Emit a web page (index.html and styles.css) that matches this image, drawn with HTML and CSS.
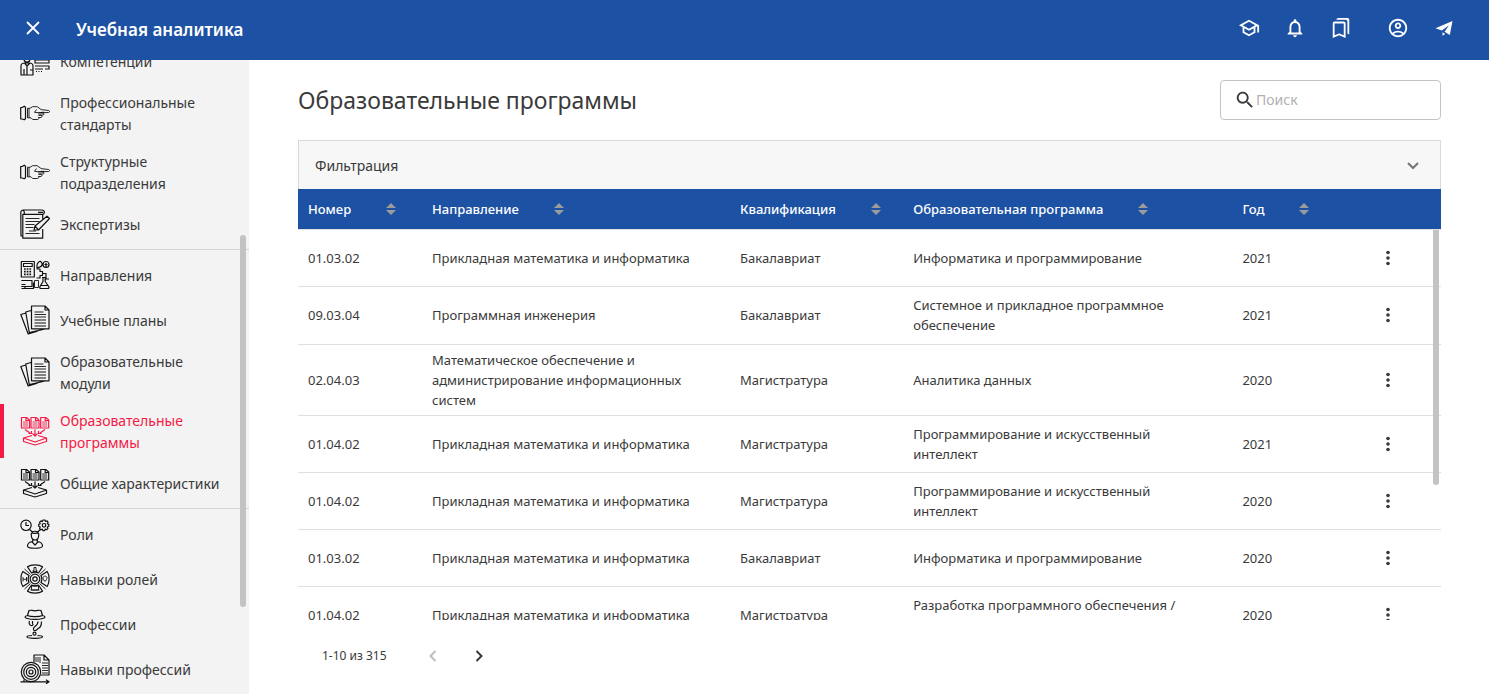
FILE: index.html
```html
<!DOCTYPE html>
<html lang="ru">
<head>
<meta charset="utf-8">
<title>Учебная аналитика</title>
<link rel="stylesheet" href="styles.css">
</head>
<body>
<svg class="sprite" aria-hidden="true">
  <symbol id="hand" viewBox="0 0 30 30">
    <path d="M.7 9.500h1.500l2-1.300 1.300 1v11.600l-1.300 1-2-.8H.7z" />
    <path class="thin" d="M7.500 10.300v9.500M9 10.300v9.500M7.500 10.300l2.500 0 2.600-1.600h4.600l4 2.900 7.400.9c1.200.2 1.200 1.900 0 2l-7.600.2M7.500 19.800l3.500 0 1.700 1.700h4.700c1.500 0 1.700-1.400 1-1.900M16.500 11.500l-2 2.800 4 .4 5.500-.5M18 15h5c1.500.3 1.300 1.900 0 2h-4.500M18.500 17.300h2.600c1.300.3 1.100 2.100-.2 2.200h-2.600" />
  </symbol>
  <symbol id="competence" viewBox="0 0 30 30">
    <path d="M1 29V20c0-2 2-3 4-3h4c2 0 4 1 4 3v9zM4 29v-6M7 20v9M10 24h3M4.500 17L7 20l3-3M4 13a3 3 0 0 0 6 0a3 3 0 0 0-6 0M15 14h14v3H15zM15 20h14v3H25M15 23h8M16 25.500h1M18.500 25.500h1M21 25.500h1" />
  </symbol>
  <symbol id="expert" viewBox="0 0 30 30">
    <path d="M.8 3.500c0-3 3.500-3 3.500 0v1.800H2.800V27H1zM2.800 1H22c3 0 3 4.300.6 4.300H4.300M22.700 5.300V10M22.700 20v9.200H2.800V27M18 3.300h5M14 21l1-4L27 7.200l2.500 2.300-11 11.500zM15 17l3.500 3.800" />
    <path class="thin" d="M5.500 9.500h14M5.500 12.500h14M5.500 15.500h9M5.500 18.500h8M5.500 24.500h14M9 22h7" />
  </symbol>
  <symbol id="direction" viewBox="0 0 30 30">
    <path d="M1.300 1.500h13v15.500h-13zM3.500 3.500h8.700v3H3.500zM17 5.500c0-2 2-4.200 3-4.200s2.500 2 2 3.700-2.500 2.500-5 3zM23 4.500a3 3 0 1 0 6 0a3 3 0 1 0-6 0M24.500 4.500h3M26 3v4.500M16.500 9h3.500v2.500h2.500v4H20V18h-3.500M22.500 13.500h3.500v5.500h3M1.300 20.500H12v6H1.300M5 26.500v2H1.500M5 28.500h8.500v-6M1.500 24.500h4M22 17.500h4M23 17.500v4L20 26.500c-.6 1.500 0 2 1 2h6.500c1.500 0 1.800-1 1.200-2l-3.500-5v-4M20.500 25.500h8" />
    <path class="dots" d="M4 9h8M4 11.700h8M4 14.400h8" />
    <path class="thin" d="M14.500 20.500h4v7h-4z" />
  </symbol>
  <symbol id="papers" viewBox="0 0 30 30">
    <path d="M11.500 1H25l4 4v18.800H11.500zM25 1v4h4M11 5.500L5.700 7l3.600 20.600L25 24M6 8L.8 9.500 8.200 29l10-3" />
    <path d="M14.500 15h11.500M14.500 18h11.500M14.500 21h11.500" /><path class="thin" d="M14.500 7h9M14.500 9.500h11.500M14.500 12h11.500" />
  </symbol>
  <symbol id="program" viewBox="0 0 30 30">
    <path d="M1.500 1.500h5l3 2.500v8h-8zM11 1.500h5l3 2.500v8h-8zM20.700 1.500h5l3 2.500v8h-8zM6 1.500V4.500h3M15.500 1.500V4.500h3M25.200 1.500V4.500h3" />
    <path class="thin" d="M3 6h5M3 8h5M3 10h5M12.500 6h5M12.500 8h5M12.500 10h5M22.200 6h5M22.200 8h5M22.200 10h5" />
    <path d="M5 13.500l5 3.500M8.500 17.500h3v-2.500M25 13.500l-5 3.500M21.500 17.500h-3v-2.500M15 13.500v6M12.500 17.500L15 20l2.500-2.500" />
    <path d="M12 19.500L3.500 22l11.500 4 11.500-4L18 19.500M3.500 22v3.500L15 29l11.500-3.500V22" />
  </symbol>
  <symbol id="role" viewBox="0 0 30 30">
    <circle cx="6" cy="6.300" r="5.200"/><path d="M6 3v3.500h3" />
    <circle cx="24" cy="6.300" r="1.800"/><path d="M23 1h2l.4 1.500 1.700-.6 1 1.400-.8 1.300 1.500.7v2l-1.500.7.7 1.400-1.400 1.300-1.400-.6-.6 1.500h-1.700l-.6-1.500-1.400.7-1.300-1.300.6-1.500-1.500-.7v-2l1.500-.7-.6-1.400 1.300-1.300 1.400.7z" />
    <path d="M9.500 10.500l3 2.500M20.500 10.500l-3 2.500M11.300 16c-1-5 8.400-5 7.400 0 0 3-1.300 5-3.700 5s-3.700-2-3.700-5zM11.500 14c3 1 5 0 7 0M12.700 20.500v2C9 23 7.500 24.500 7.500 27c0 3 15 3 15 0 0-2.500-1.500-4-5.200-4.500v-2M12 22.800l3 3.200 3-3.200" />
  </symbol>
  <symbol id="wheel" viewBox="0 0 30 30">
    <circle cx="15" cy="15" r="4.800"/><circle cx="15" cy="15" r="2.200"/>
    <path d="M7.500 2.800C11 .3 19 .3 22.500 2.800L18.500 9c-2-1-5-1-7 0zM7.500 27.200c3.500 2.500 11.500 2.500 15 0L18.500 21c-2 1-5 1-7 0zM2.800 7.500C.3 11 .3 19 2.800 22.500L9 18.500c-1-2-1-5 0-7zM27.200 7.500c2.500 3.500 2.500 11.500 0 15L21 18.500c1-2 1-5 0-7z" />
    <path class="thin" d="M13 7.500V6.500h1L14 3.500h2l0 3h1v1zM3 13v4.500M6.500 13v4.500M3 15.300h3.500M11.500 22h7v4h-7zM10.500 26h9M23 14c0-2.500 4-2.500 4 0 0 1.500-1.200 1.700-1.200 3h-1.600c0-1.300-1.200-1.500-1.200-3M4.500 5l6 5.500M25.500 5l-6 5.500M4.500 25l6-5.500M25.500 25l-6-5.500" />
  </symbol>
  <symbol id="spy" viewBox="0 0 30 30">
    <path d="M7.500 6.500L9 1.500c2-.8 3 .3 6 .3s4-1.100 6-.3l1.500 5M7.500 6.500c3 1.500 12 1.500 15 0M7.500 6.500c-3 .5-3 2-1 2.700 5 1.500 12 1.500 17 0 2-.7 2-2.200-1-2.700M9.500 12c-.8 2-.3 4 1.500 4.500 1.500.3 2-.5 2-1.500M12.500 12v3M21.500 12.500c0 5-1.500 6-4 7.500-1 1-1 2-3 1.500-2-.5-1-3 .5-4 2-1.300 3-2.500 3-5" />
    <circle cx="14.500" cy="24.700" r="1.500"/><path d="M12 26.500c-2 0-5 .3-5 1.300 0 2 15.500 2 15.500 0 0-1-3-1.300-5-1.300" />
  </symbol>
  <symbol id="target" viewBox="0 0 30 30">
    <circle cx="11" cy="18" r="9.700"/><circle cx="11" cy="18" r="7.300"/><circle cx="11" cy="18" r="4.700"/><circle cx="11" cy="18" r="2"/>
    <path d="M14 8V1h10l5 5v15h-8M24 1v5h5M.5 27.800H29M26 25.800l3 2-3 2M4 25.500v2" />
    <path class="thin" d="M16 3v5M18 3v5M20 3v6M22 9h6M22 11.500h6M22 14h6M22 16.500h6M22 19h6" />
  </symbol>
  <symbol id="dots" viewBox="0 0 24 24"><circle cx="12" cy="6" r="2"/><circle cx="12" cy="12" r="2"/><circle cx="12" cy="18" r="2"/></symbol>
  <symbol id="sort" viewBox="0 0 10 12"><path d="M0 5L5 0l5 5zM0 7h10l-5 5z"/></symbol>
</svg>

<div class="app">
  <header class="topbar">
    <button class="icon-btn" aria-label="Закрыть меню"><svg class="icon" viewBox="0 0 22 22"><path class="cross" d="M5 5l12 12M17 5L5 17"/></svg></button>
    <div class="brand">Учебная аналитика</div>
    <nav class="tools" aria-label="Инструменты">
      <a class="icon-btn" href="#" aria-label="Обучение"><svg class="icon" viewBox="0 0 24 24"><path d="M12 3L1 9l4 2.180v6L12 21l7-3.820v-6l2-1.090V17h2V9L12 3zm6.820 6L12 12.720 5.180 9 12 5.280 18.820 9zM17 15.990l-5 2.730-5-2.730v-3.720L12 15l5-2.730v3.720z"/></svg></a>
      <a class="icon-btn" href="#" aria-label="Уведомления"><svg class="icon" viewBox="0 0 24 24"><path d="M12 22c1.100 0 2-.9 2-2h-4c0 1.100.9 2 2 2zm6-6v-5c0-3.070-1.630-5.640-4.500-6.320V4c0-.83-.67-1.500-1.500-1.500s-1.500.67-1.500 1.500v.68C7.640 5.360 6 7.920 6 11v5l-2 2v1h16v-1l-2-2zm-2 1H8v-6c0-2.480 1.510-4.500 4-4.500s4 2.020 4 4.500v6z"/></svg></a>
      <a class="icon-btn" href="#" aria-label="Закладки"><svg class="icon" viewBox="0 0 24 24"><path d="M15 7v12.970l-4.210-1.810-.79-.34-.79.34L5 19.970V7h10m4-6H8.990C7.890 1 7 1.900 7 3h10c1.100 0 2 .9 2 2v13l2 1V3c0-1.100-.9-2-2-2zm-4 4H5c-1.100 0-2 .9-2 2v16l7-3 7 3V7c0-1.100-.9-2-2-2z"/></svg></a>
      <a class="icon-btn profile" href="#" aria-label="Профиль"><svg class="icon" viewBox="0 0 24 24"><path d="M12 2C6.480 2 2 6.480 2 12s4.480 10 10 10 10-4.480 10-10S17.520 2 12 2zM7.350 18.500C8.660 17.560 10.260 17 12 17s3.340.56 4.650 1.500C15.340 19.440 13.740 20 12 20s-3.340-.56-4.650-1.500zm10.790-1.380C16.450 15.800 14.320 15 12 15s-4.450.8-6.140 2.120C4.700 15.730 4 13.950 4 12c0-4.420 3.580-8 8-8s8 3.580 8 8c0 1.950-.7 3.730-1.860 5.120zM12 6c-1.930 0-3.500 1.570-3.500 3.500S10.070 13 12 13s3.500-1.570 3.500-3.500S13.930 6 12 6zm0 5c-.83 0-1.500-.67-1.500-1.500S11.170 8 12 8s1.500.67 1.500 1.500S12.830 11 12 11z"/></svg></a>
      <a class="icon-btn" href="#" aria-label="Telegram"><svg class="icon" viewBox="0 0 22 22"><path d="M2.500 11.200L19.500 4l-2.700 14-5.200-3.200 4.400-6.600-7.200 5.400zM9.500 15.300l2.700 1.600-2.700 1.900z"/></svg></a>
    </nav>
  </header>

  <div class="body">
    <aside class="sidebar">
      <nav class="menu" aria-label="Разделы">
        <a class="item" href="#"><svg><use href="#competence"/></svg><span>Компетенции</span></a>
        <a class="item" href="#"><svg><use href="#hand"/></svg><span>Профессиональные стандарты</span></a>
        <a class="item" href="#"><svg><use href="#hand"/></svg><span>Структурные подразделения</span></a>
        <a class="item" href="#"><svg><use href="#expert"/></svg><span>Экспертизы</span></a>
        <hr>
        <a class="item" href="#"><svg><use href="#direction"/></svg><span>Направления</span></a>
        <a class="item" href="#"><svg><use href="#papers"/></svg><span>Учебные планы</span></a>
        <a class="item" href="#"><svg><use href="#papers"/></svg><span>Образовательные модули</span></a>
        <a class="item active" href="#" aria-current="page"><svg><use href="#program"/></svg><span>Образовательные программы</span></a>
        <a class="item" href="#"><svg><use href="#program"/></svg><span>Общие характеристики</span></a>
        <hr>
        <a class="item" href="#"><svg><use href="#role"/></svg><span>Роли</span></a>
        <a class="item" href="#"><svg><use href="#wheel"/></svg><span>Навыки ролей</span></a>
        <a class="item" href="#"><svg><use href="#spy"/></svg><span>Профессии</span></a>
        <a class="item" href="#"><svg><use href="#target"/></svg><span>Навыки профессий</span></a>
      </nav>
      <div class="thumb menu-thumb"></div>
    </aside>

    <main class="content">
      <div class="heading">
        <h1>Образовательные программы</h1>
        <label class="search">
          <svg class="icon" viewBox="0 0 24 24" aria-hidden="true"><path d="M15.500 14h-.79l-.28-.27C15.410 12.590 16 11.110 16 9.500 16 5.910 13.090 3 9.500 3S3 5.910 3 9.500 5.910 16 9.500 16c1.610 0 3.090-.59 4.230-1.570l.27.28v.79l5 4.990L20.490 19l-4.990-5zm-6 0C7.010 14 5 11.990 5 9.500S7.010 5 9.500 5 14 7.010 14 9.500 11.990 14 9.500 14z"/></svg>
          <input type="search" placeholder="Поиск" aria-label="Поиск">
        </label>
      </div>

      <button class="filter" aria-expanded="false"><span>Фильтрация</span><svg class="icon chevron" viewBox="0 0 22 22"><path d="M6 8l5 5 5-5"/></svg></button>

      <div class="table-area">
        <table>
          <colgroup><col class="c-num"><col class="c-dir"><col class="c-qual"><col class="c-prog"><col class="c-year"><col class="c-menu"></colgroup>
          <thead>
            <tr>
              <th><button>Номер<svg><use href="#sort"/></svg></button></th>
              <th><button>Направление<svg><use href="#sort"/></svg></button></th>
              <th><button>Квалификация<svg><use href="#sort"/></svg></button></th>
              <th><button>Образовательная программа<svg><use href="#sort"/></svg></button></th>
              <th><button>Год<svg><use href="#sort"/></svg></button></th>
              <td></td>
            </tr>
          </thead>
          <tbody>
            <tr><td>01.03.02</td><td>Прикладная математика и информатика</td><td>Бакалавриат</td><td>Информатика и программирование</td><td>2021</td><td><button class="more" aria-label="Действия"><svg class="icon"><use href="#dots"/></svg></button></td></tr>
            <tr><td>09.03.04</td><td>Программная инженерия</td><td>Бакалавриат</td><td>Системное и прикладное программное обеспечение</td><td>2021</td><td><button class="more" aria-label="Действия"><svg class="icon"><use href="#dots"/></svg></button></td></tr>
            <tr><td>02.04.03</td><td>Математическое обеспечение и администрирование информационных систем</td><td>Магистратура</td><td>Аналитика данных</td><td>2020</td><td><button class="more" aria-label="Действия"><svg class="icon"><use href="#dots"/></svg></button></td></tr>
            <tr><td>01.04.02</td><td>Прикладная математика и информатика</td><td>Магистратура</td><td>Программирование и искусственный интеллект</td><td>2021</td><td><button class="more" aria-label="Действия"><svg class="icon"><use href="#dots"/></svg></button></td></tr>
            <tr><td>01.04.02</td><td>Прикладная математика и информатика</td><td>Магистратура</td><td>Программирование и искусственный интеллект</td><td>2020</td><td><button class="more" aria-label="Действия"><svg class="icon"><use href="#dots"/></svg></button></td></tr>
            <tr><td>01.03.02</td><td>Прикладная математика и информатика</td><td>Бакалавриат</td><td>Информатика и программирование</td><td>2020</td><td><button class="more" aria-label="Действия"><svg class="icon"><use href="#dots"/></svg></button></td></tr>
            <tr><td>01.04.02</td><td>Прикладная математика и информатика</td><td>Магистратура</td><td>Разработка программного обеспечения / <br>&nbsp;</td><td>2020</td><td><button class="more" aria-label="Действия"><svg class="icon"><use href="#dots"/></svg></button></td></tr>
          </tbody>
        </table>
        <div class="thumb table-thumb"></div>
      </div>

      <div class="pager">
        <span>1-10 из 315</span>
        <div class="pager-buttons">
          <button disabled aria-label="Предыдущая страница"><svg class="icon chevron" viewBox="0 0 22 22"><path d="M13.500 6l-5 5 5 5"/></svg></button>
          <button aria-label="Следующая страница"><svg class="icon chevron" viewBox="0 0 22 22"><path d="M8.500 6l5 5-5 5"/></svg></button>
        </div>
      </div>
    </main>
  </div>
</div>
</body>
</html>
```
FILE: styles.css
```css
* { box-sizing: border-box; }
body { margin: 0; font-family: "Noto Sans", "Open Sans", sans-serif; font-size: 14px; line-height: 20px; color: #3a3a3a; background: #fff; }
button, input { font: inherit; color: inherit; border: 0; padding: 0; background: none; }
button { cursor: pointer; }
a { color: inherit; text-decoration: none; }
.sprite { position: absolute; width: 0; height: 0; }
.icon { display: block; width: 22px; height: 22px; fill: currentColor; }

.app { display: flex; flex-direction: column; height: 100vh; overflow: hidden; }
.topbar { display: flex; align-items: center; flex: none; height: 60px; padding: 0 22px 4px 10px; color: #fff; background: #1d51a3; }
.icon-btn { display: flex; align-items: center; justify-content: center; width: 46px; height: 46px; }
.brand { margin-left: 20px; padding-top: 4px; font-size: 17px; line-height: 24px; font-weight: 600; }
.tools { display: flex; margin-left: auto; }
.profile { margin-left: 11px; }
.cross { fill: none; stroke: currentColor; stroke-width: 1.8; }

.body { display: flex; flex: 1; min-height: 0; }
.sidebar { position: relative; flex: none; width: 249px; overflow: hidden; background: #f3f3f3; }
.menu { display: flex; flex-direction: column; gap: 5px; margin-top: -19px; }
.menu hr { width: 100%; height: 1px; margin: 0; border: 0; background: #d3d3d3; }
.item { display: flex; align-items: center; gap: 10px; padding: 6px 24px 4px 20px; line-height: 22px; }
.item svg { flex: none; width: 30px; height: 30px; margin: -1px 0 1px; fill: none; stroke: #111; stroke-width: 1.2; stroke-linejoin: round; }
.thin { stroke-width: .9; }
.dots { stroke-width: 1.7; stroke-dasharray: 1.7 1; }
.item.active { padding-left: 16px; border-left: 4px solid #f31a46; color: #f31a46; }
.item.active svg { stroke: #f31a46; }
.thumb { position: absolute; width: 6px; border-radius: 3px; background: #c3c3c3; }
.menu-thumb { top: 175px; right: 3px; height: 372px; }

.content { display: flex; flex-direction: column; flex: 1; min-width: 0; padding: 20px 48px 0 49px; }
.heading { display: flex; align-items: center; justify-content: space-between; height: 40px; margin-bottom: 20px; }
h1 { margin: 0; font-size: 23px; line-height: 32px; font-weight: 400; }
.search { display: flex; align-items: center; width: 221px; height: 40px; padding: 0 13px; border: 1px solid #c4c4c4; border-radius: 4px; }
.search input { flex: 1; min-width: 0; outline: 0; }
.search input::placeholder { color: #b0b0b0; opacity: 1; }
.filter { display: flex; align-items: center; justify-content: space-between; flex: none; height: 49px; padding: 2px 16px 0; border: 1px solid #d9d9d9; border-bottom: 0; background: #f7f7f7; }
.chevron { fill: none; stroke: currentColor; stroke-width: 2; }
.filter .chevron { color: #757575; }

.table-area { position: relative; flex: 1; min-height: 0; overflow: hidden; }
table { width: 100%; table-layout: fixed; border-collapse: separate; border-spacing: 0; font-size: 13px; }
.c-num { width: 10.85%; }
.c-dir { width: 26.95%; }
.c-qual { width: 15.15%; }
.c-prog { width: 28.8%; }
.c-year { width: 9%; }
.c-menu { width: 9.25%; }
thead th, thead td { height: 41px; padding: 0 10px; border-bottom: 1px solid #e0e0e0; background: #1d51a3; background-clip: padding-box; color: #fff; text-align: left; }
th button { display: flex; align-items: center; gap: 35px; font-weight: 500; white-space: nowrap; }
th svg { width: 10px; height: 12px; fill: #9b9b9b; }
tbody td { padding: 5px 10px; border-bottom: 1px solid #e0e0e0; }
tbody tr:nth-child(2) td { padding-bottom: 6px; }
tbody td:nth-child(4) { padding-right: 40px; }
.more { display: flex; align-items: center; justify-content: center; width: 46px; height: 46px; margin: 0 auto; }
.table-thumb { top: 41px; right: 2px; height: 255px; border-radius: 0 0 3px 3px; }

.pager { display: flex; align-items: center; flex: none; gap: 23px; padding: 13px 24px 15px; font-size: 12px; }
.pager-buttons { display: flex; }
.pager button { display: flex; align-items: center; justify-content: center; width: 46px; height: 46px; }
.pager button:disabled { color: #bdbdbd; cursor: default; }
```
